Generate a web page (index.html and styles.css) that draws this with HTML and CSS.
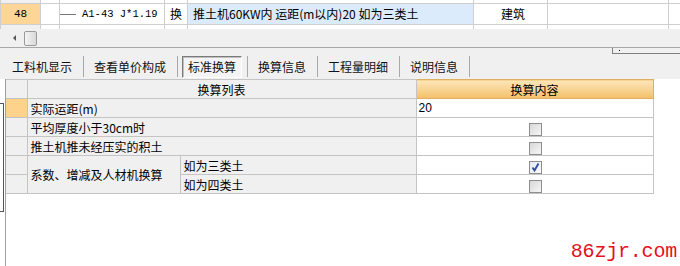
FILE: index.html
```html
<!DOCTYPE html>
<html lang="zh-CN">
  <head>
    <meta charset="UTF-8" />
    <title>标准换算</title>
    <link rel="stylesheet" href="styles.css">
  </head>
  <body>
    <div class="top-grid">
      <table class="list">
        <colgroup>
          <col style="width:40px" /><col style="width:19px" /><col style="width:105px" />
          <col style="width:23px" /><col style="width:286px" /><col style="width:74px" />
          <col style="width:121px" /><col style="width:12px" />
        </colgroup>
        <tr>
          <td class="num">47</td><td></td><td class="code">A1-42</td>
          <td class="mark">换</td><td>推土机推土 运距20m以内</td><td class="unit">建筑</td><td></td><td></td>
        </tr>
        <tr>
          <td class="num cur">48</td><td></td><td class="code"><span class="tree"></span>A1-43 J*1.19</td>
          <td class="mark">换</td><td class="sel">推土机60KW内 运距(m以内)20 如为三类土</td><td class="unit">建筑</td><td></td><td></td>
        </tr>
        <tr>
          <td class="num">49</td><td></td><td class="code">A1-44</td>
          <td class="mark">、</td><td>人工运土方 运距增加</td><td class="unit">建筑</td><td></td><td></td>
        </tr>
      </table>
    </div>

    <div class="hscroll">
      <span class="arrow"></span>
      <span class="thumb"></span>
    </div>

    <div class="tabbar">
      <span class="tab">工料机显示</span><span class="sep"></span>
      <span class="tab">查看单价构成</span><span class="sep"></span>
      <span class="tab active">标准换算</span><span class="sep"></span>
      <span class="tab">换算信息</span><span class="sep"></span>
      <span class="tab">工程量明细</span><span class="sep"></span>
      <span class="tab">说明信息</span><span class="sep"></span>
      <span class="corner"><i></i></span>
    </div>

    <div class="panel">
      <div class="side"><span class="grip"></span></div>
      <table class="conv">
        <colgroup>
          <col style="width:21px" /><col style="width:153px" />
          <col style="width:236px" /><col style="width:237px" />
        </colgroup>
        <tr>
          <th class="rh"></th>
          <th colspan="2">换算列表</th>
          <th class="hot">换算内容</th>
        </tr>
        <tr>
          <td class="rh cur"></td>
          <td colspan="2" class="name">实际运距(m)</td>
          <td class="val">20</td>
        </tr>
        <tr>
          <td class="rh"></td>
          <td colspan="2" class="name">平均厚度小于30cm时</td>
          <td class="chk"><span class="box"></span></td>
        </tr>
        <tr>
          <td class="rh"></td>
          <td colspan="2" class="name">推土机推未经压实的积土</td>
          <td class="chk"><span class="box"></span></td>
        </tr>
        <tr>
          <td class="rh"></td>
          <td rowspan="2" class="name">系数、增减及人材机换算</td>
          <td class="name">如为三类土</td>
          <td class="chk">
            <span class="box on">
              <svg width="11" height="11" viewBox="0 0 11 11"><path d="M2.5 5.5 L4.5 8.5 L8.5 1.5" fill="none" stroke="#2c4a9a" stroke-width="1.8" /></svg>
            </span>
          </td>
        </tr>
        <tr>
          <td class="rh"></td>
          <td class="name">如为四类土</td>
          <td class="chk"><span class="box"></span></td>
        </tr>
      </table>
    </div>

    <div class="mark-wm">86zjr.com</div>
  </body>
</html>
```

FILE: styles.css
```css
/* Global styles */
* {
  margin: 0;
  padding: 0;
  box-sizing: border-box;
}

body {
  width: 680px;
  height: 266px;
  overflow: hidden;
  position: relative;
  background: #ffffff;
  color: #000;
  font-family: "Noto Sans CJK SC", sans-serif;
  font-size: 12px;
}

table {
  border-collapse: collapse;
  table-layout: fixed;
}

/* upper list */
.top-grid {
  height: 29px;
  overflow: hidden;
  background: #fff;
}

.list {
  width: 680px;
  margin-top: -18px;
}

.list td {
  height: 21px;
  line-height: 20px;
  border: 1px solid #cfcfcf;
  white-space: nowrap;
  overflow: hidden;
  padding: 0 3px;
}

.list .num {
  text-align: center;
  background: #f0f0f0;
  font-family: "Liberation Mono", monospace;
  font-size: 11px;
}

.list .num.cur {
  background: #fdd596;
}

.list .code {
  font-family: "Liberation Mono", monospace;
  font-size: 10.5px;
  padding-left: 0;
}

.tree {
  display: inline-block;
  width: 16px;
  height: 1px;
  background: #777;
  vertical-align: middle;
  margin-right: 6px;
}

.list .mark {
  text-align: center;
  padding: 0;
}

.list .sel {
  background: #dcebfb;
  padding-left: 5px;
}

.list .unit {
  padding-left: 27px;
}

/* horizontal scroller */
.hscroll {
  height: 18px;
  background: #f0f0f0;
  display: flex;
  align-items: center;
  padding-left: 13px;
  gap: 8px;
}

.arrow {
  width: 0;
  height: 0;
  border-top: 3px solid transparent;
  border-bottom: 3px solid transparent;
  border-right: 3px solid #555;
}

.thumb {
  width: 13px;
  height: 15px;
  border: 1px solid #9a9a9a;
  border-radius: 2px;
  background: linear-gradient(to right, #f4f4f4, #d8d8d8);
}

/* tabs */
.tabbar {
  height: 32px;
  border-top: 1px solid #a8a8a8;
  background: #f0f0f0;
  display: flex;
  align-items: flex-end;
  padding-left: 6px;
  padding-bottom: 1px;
}

.tab {
  height: 22px;
  line-height: 20px;
  padding: 0 5px;
  border: 1px solid transparent;
  color: #111;
  font-size: 12px;
}

.tab.active {
  border-color: #7a7a7a #ffffff #ffffff #7a7a7a;
  background: #f4f4f4;
  box-shadow: inset 1px 1px 0 #c0c0c0;
}

.sep {
  width: 1px;
  height: 21px;
  margin: 0 4px 1px 5px;
  background: #a8a8a8;
}

.corner {
  align-self: flex-start;
  margin-left: auto;
  width: 68px;
  height: 6px;
  border: 1px solid #808080;
  border-top: none;
  border-right: none;
  position: relative;
}

.corner i {
  display: block;
  width: 1px;
  height: 1px;
  background: #000;
  margin: 2px 0 0 6px;
}

/* conversion panel */
.panel {
  display: flex;
  height: 187px;
}

.side {
  width: 6px;
  border-right: 1px solid #a0a0a0;
  padding-top: 24px;
}

.grip {
  display: block;
  width: 4px;
  height: 109px;
  border: 1px solid #555;
  border-left: none;
}

.conv {
  width: 647px;
  align-self: flex-start;
}

.conv th,
.conv td {
  height: 19px;
  line-height: 17px;
  border: 1px solid #c4c4c4;
  padding: 0 3px;
  font-weight: normal;
  white-space: nowrap;
}

.conv th {
  background: #f0f0f0;
  text-align: center;
}

.conv th.hot {
  background: linear-gradient(#fde6ba, #f4c06a);
  border-color: #e0b060;
}

.conv .rh {
  background: #f0f0f0;
  border-left: none;
}

.conv .rh.cur {
  background: #fdd28a;
}

.conv .name {
  background: #f0f0f0;
}

.conv .val {
  font-family: "Liberation Sans", sans-serif;
  font-size: 12px;
  padding-left: 2px;
}

.conv .chk {
  text-align: center;
  padding: 0;
}

.box {
  display: inline-block;
  width: 13px;
  height: 13px;
  border: 1px solid #8e8e8e;
  background: linear-gradient(135deg, #d8d8d8, #f6f6f6);
  vertical-align: middle;
  margin-left: 2px;
}

.box.on {
  background: linear-gradient(135deg, #e4e8f0, #fafafa);
}

.box svg {
  display: block;
}

/* watermark over the page */
.mark-wm {
  position: absolute;
  right: 3px;
  top: 242px;
  color: #e4101c;
  font-family: "Liberation Mono", monospace;
  font-size: 20px;
  line-height: 20px;
  letter-spacing: -0.2px;
}
```
